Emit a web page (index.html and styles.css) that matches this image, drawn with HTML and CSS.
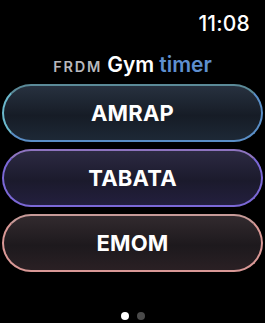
FILE: index.html
```html
<!DOCTYPE html>
<html>
<head>
<meta charset="utf-8">
<link rel="stylesheet" href="styles.css">
</head>
<body>
<div class="screen">
  <div class="status"><span class="time">11:08</span></div>
  <div class="title"><span class="brand">FRDM</span> <span class="gym">Gym</span> <span class="timer">timer</span></div>
  <div class="list">
    <div class="btn amrap">AMRAP</div>
    <div class="btn tabata">TABATA</div>
    <div class="btn emom">EMOM</div>
  </div>
  <div class="dots"><span class="dot on"></span><span class="dot"></span></div>
</div>
</body>
</html>
```
FILE: styles.css
```css
html, body { margin: 0; padding: 0; background: #000; }
body { width: 265px; height: 323px; overflow: hidden; font-family: Inter, "Noto Sans", sans-serif; color: #fff; }
.screen { display: flex; flex-direction: column; height: 323px; }
.status { display: flex; justify-content: flex-end; padding: 11px 15px 0 0; height: 26px; }
.time { font-size: 21px; line-height: 26px; font-weight: 500; letter-spacing: 0.2px; }
.title { display: flex; justify-content: center; align-items: baseline; gap: 5px; margin-top: 16px; height: 24px; line-height: 24px; }
.brand { font-size: 14.5px; font-weight: 600; color: #b9b9be; letter-spacing: 1.8px; }
.gym { font-size: 21px; font-weight: 600; color: #fff; }
.timer { font-size: 21px; font-weight: 600; color: #5e8fcf; }
.list { display: flex; flex-direction: column; gap: 7px; padding: 0 2px; margin-top: 7px; }
.btn { height: 54px; border-radius: 30px; border: 2px solid; display: flex; align-items: center; justify-content: center; font-size: 22px; font-weight: 700; letter-spacing: 0.2px; }
.amrap { background: linear-gradient(#27313f, #161c26 55%, #1d2836); border-color: #5a8ec6; border-top-color: #5b8a98; border-left-color: #6bb8cc; }
.tabata { background: linear-gradient(#2c2a42, #1b1a2c 55%, #231f3e); border-color: #7b68d6; border-top-color: #8e74c0; }
.emom { background: linear-gradient(#322a2e, #1d191d 55%, #2a2024); border-color: #d99896; border-top-color: #c79a98; }
.dots { display: flex; justify-content: center; gap: 8px; margin-top: 40px; }
.dot { width: 8px; height: 8px; border-radius: 50%; background: #4a4a4a; }
.dot.on { background: #fff; }
```
